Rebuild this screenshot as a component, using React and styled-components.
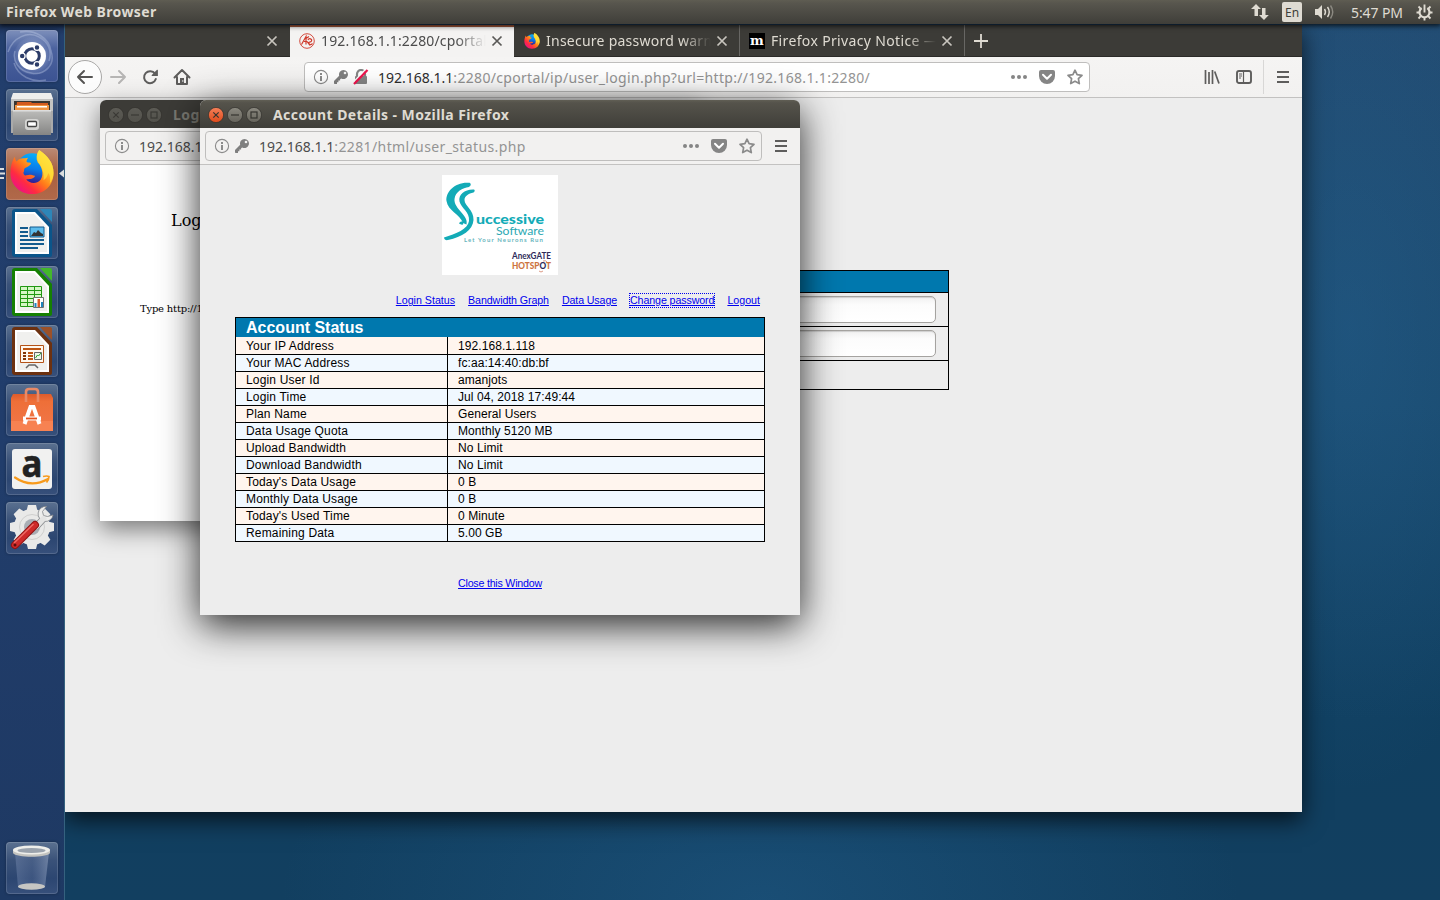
import React from "react";
import styled, { createGlobalStyle, css } from "styled-components";

const GlobalStyle = createGlobalStyle`
  * { box-sizing: border-box; }
  html, body, #root { margin: 0; padding: 0; width: 100%; height: 100%; overflow: hidden; }
  body { font-family: "Noto Sans", sans-serif; font-size: 14px; color: #4c4c4c; }
  svg { display: block; flex: none; }
`;

const Desktop = styled.div`
  position: relative;
  width: 1440px;
  height: 900px;
  overflow: hidden;
  display: flex;
  flex-direction: column;
  background:
    radial-gradient(ellipse 480px 260px at 760px 900px, rgba(36, 98, 146, 0.42), rgba(36, 98, 146, 0)),
    radial-gradient(ellipse 200px 460px at 1350px 330px, rgba(36, 98, 146, 0.4), rgba(36, 98, 146, 0)),
    linear-gradient(180deg, #234b71 0%, #1a4a6e 45%, #103f60 80%, #123f60 100%);
`;

const TopPanel = styled.header`
  position: relative;
  z-index: 10;
  flex: none;
  height: 24px;
  display: flex;
  align-items: center;
  padding: 0 7px 0 6px;
  background: linear-gradient(#5f5d52 0, #58564e 3px, #3f3e39 100%);
  box-shadow: 0 1px 5px 1px rgba(0, 0, 0, 0.75);
  color: #dfdbd2;
`;
const PanelTitle = styled.div`
  flex: 1;
  font-weight: 700;
  font-size: 14px;
  line-height: 24px;
  letter-spacing: 0.38px;
`;
const Indicators = styled.div`
  display: flex;
  align-items: center;
`;
const LangBadge = styled.div`
  width: 20px;
  height: 20px;
  margin: 0 13px 0 13px;
  border-radius: 2px;
  background: #dfdbd2;
  color: #3f3e39;
  font-size: 12px;
  line-height: 21px;
  text-align: center;
`;
const Clock = styled.div`
  margin: 0 12px 0 16px;
  width: 53px;
  white-space: nowrap;
  font-size: 14px;
  letter-spacing: -0.1px;
`;

const Workspace = styled.div`
  flex: 1;
  display: flex;
  min-height: 0;
`;
const Launcher = styled.nav`
  position: relative;
  z-index: 2;
  width: 65px;
  flex: none;
  display: flex;
  flex-direction: column;
  gap: 7px;
  padding: 6px 0 6px 6px;
  border-right: 1px solid #35627f;
  background: linear-gradient(#1c3156 0, #223e6c 12px, #213d6b 50%, #1e3963 100%);
`;
const Tile = styled.div`
  position: relative;
  width: 52px;
  height: 52px;
  flex: none;
  border-radius: 4px;
  background: ${(p) => p.$bg || "linear-gradient(#5b7190 0, #3a5279 35%, #2c4671 70%, #37507b 100%)"};
  box-shadow: inset 0 0 0 1px rgba(255, 255, 255, 0.14), 0 0 3px rgba(0, 0, 0, 0.3);
  margin-top: ${(p) => (p.$last ? "auto" : 0)};
`;
const RunningMarks = styled.svg`
  position: absolute;
  left: 0;
  top: 142px;
`;

const windowBase = css`
  position: absolute;
  display: flex;
  flex-direction: column;
`;
const MainWindow = styled.section`
  ${windowBase}
  left: 65px;
  top: 25px;
  width: 1237px;
  height: 787px;
  background: #ededed;
  box-shadow: 0 8px 22px rgba(0, 0, 0, 0.7);
`;
const Popup = styled.section`
  ${windowBase}
  left: ${(p) => p.$x}px;
  top: 100px;
  width: 600px;
  height: ${(p) => p.$h}px;
  border-radius: 6px 6px 0 0;
  background: ${(p) => p.$bg};
  box-shadow: ${(p) => (p.$active ? "0 10px 38px rgba(0,0,0,0.85)" : "0 8px 24px rgba(0,0,0,0.5)")};
`;

const TabStrip = styled.div`
  display: flex;
  height: 32px;
  flex: none;
  background: #3c3b37;
  border-bottom: 1px solid #2b2a28;
`;
const Tab = styled.div`
  width: ${(p) => p.$w || 225}px;
  height: ${(p) => (p.$active ? 32 : 31)}px;
  display: flex;
  align-items: center;
  padding: 0 ${(p) => (p.$line || p.$active ? 11 : 12)}px 0 ${(p) => p.$pl || 9}px;
  color: ${(p) => (p.$active ? "#4c4c4c" : "#dfdbd2")};
  background: ${(p) => (p.$active ? "#f4f3f2" : "transparent")};
  border-top: ${(p) => (p.$active ? "2px solid #a4583a" : "0")};
  border-right: ${(p) => (p.$line ? "1px solid #686764" : "0")};
`;
const TabLabel = styled.div`
  flex: 1;
  margin: 0 5px 0 6px;
  overflow: hidden;
  white-space: nowrap;
  line-height: 22px;
  letter-spacing: ${(p) => p.$spacing || 0}px;
  mask-image: linear-gradient(to right, #000 82%, transparent 100%);
`;
const TabContent = styled.div`
  flex: 1;
  min-width: 0;
  display: flex;
  align-items: center;
  padding-bottom: ${(p) => (p.$active ? 2 : 0)}px;
`;
const NewTab = styled.div`
  width: 32px;
  display: flex;
  align-items: center;
  justify-content: center;
`;

const NavBar = styled.div`
  height: 41px;
  flex: none;
  display: flex;
  align-items: center;
  padding: 0 3px 0 3px;
  background: linear-gradient(#f5f4f3, #f2f1f0);
  border-bottom: 1px solid #c2c1c0;
`;
const BackButton = styled.div`
  width: 34px;
  height: 34px;
  border-radius: 50%;
  border: 1px solid #a9a8a7;
  background: #fcfcfc;
  display: flex;
  align-items: center;
  justify-content: center;
`;
const NavIcon = styled.div`
  width: 32px;
  display: flex;
  justify-content: center;
  color: ${(p) => (p.$dim ? "#b6b5b4" : "#5e5d5c")};
`;
const AddressBar = styled.div`
  width: ${(p) => p.$w}px;
  height: 30px;
  margin-left: ${(p) => p.$ml}px;
  display: flex;
  align-items: center;
  padding: 0 6px 0 8px;
  background: ${(p) => p.$bg};
  border: 1px solid #bfbebd;
  border-radius: 4px;
  color: #8b8b8b;
`;
const IdentityIcons = styled.div`
  display: flex;
  gap: 4px;
  margin-left: 4px;
`;
const UrlText = styled.div`
  flex: 1;
  margin-left: ${(p) => p.$ml}px;
  padding-top: 2px;
  overflow: hidden;
  white-space: nowrap;
  font-size: 14px;
  line-height: 24px;
  letter-spacing: ${(p) => p.$spacing || 0.32}px;
  color: #949494;
`;
const Host = styled.span`
  color: ${(p) => p.$color || "#2e2e2e"};
  letter-spacing: 0;
`;
const PageActions = styled.div`
  display: flex;
  align-items: center;
  gap: 12px;
`;
const RightTools = styled.div`
  margin-left: auto;
  display: flex;
  align-items: center;
`;
const ToolDivider = styled.div`
  width: 1px;
  height: 34px;
  background: #d8d7d6;
  margin: 0 3px;
`;

const MainPage = styled.main`
  flex: 1;
  display: flex;
  justify-content: center;
  align-items: flex-start;
  padding-top: 172px;
`;
const LoginTable = styled.div`
  width: 531px;
  border: 1px solid #000;
`;
const LoginHead = styled.div`
  height: 22px;
  background: #0078ae;
  border-bottom: 1px solid #000;
`;
const LoginRow = styled.div`
  height: ${(p) => p.$h}px;
  display: flex;
  justify-content: flex-end;
  align-items: center;
  padding-right: 12px;
  border-bottom: ${(p) => (p.$last ? "0" : "1px solid #000")};
`;
const Field = styled.div`
  width: 300px;
  height: 27px;
  border: 1px solid #a5a3a0;
  border-radius: 5px;
  background: linear-gradient(#f0f0f0, #fcfcfc 8px, #fff);
  box-shadow: inset 0 1px 1px rgba(0, 0, 0, 0.14);
`;

const TitleBar = styled.div`
  height: 28px;
  flex: none;
  display: flex;
  align-items: center;
  gap: 3px;
  padding: 1px 0 0 ${(p) => (p.$active ? 7.5 : 7.5)}px;
  border-radius: 6px 6px 0 0;
  background: ${(p) => (p.$active ? "linear-gradient(#605e54 0, #55534b 3px, #3f3e39 100%)" : "#3c3b37")};
`;
const WindowTitle = styled.div`
  margin-left: 8.5px;
  font-weight: 700;
  font-size: 14px;
  white-space: nowrap;
  letter-spacing: 0.42px;
  color: ${(p) => (p.$active ? "#dfdbd2" : "#7a7972")};
`;
const PopupBar = styled.div`
  height: 37px;
  flex: none;
  display: flex;
  align-items: center;
  padding: 0 11px 0 5px;
  background: #f2f1f0;
  border-bottom: 1px solid #c3c2c1;
  justify-content: space-between;
`;

const LogoutPage = styled.main`
  font-family: "DejaVu Serif", serif;
  color: #000;
  padding: 46px 0 0 40px;
`;
const LogoutHeading = styled.div`
  font-size: 16px;
  line-height: 20px;
  padding-left: 31px;
`;
const LogoutHint = styled.div`
  margin-top: 71px;
  font-size: 10px;
  line-height: 14px;
  letter-spacing: -0.2px;
  white-space: nowrap;
`;

const StatusPage = styled.main`
  flex: 1;
  display: flex;
  flex-direction: column;
  padding: 10px 35px 0;
  font-family: "Liberation Sans", Arial, sans-serif;
  color: #000;
`;
const LogoBox = styled.div`
  align-self: center;
  width: 116px;
  height: 100px;
  background: #fff;
`;
const LinkRow = styled.div`
  display: flex;
  justify-content: flex-end;
  gap: 13px;
  padding-right: 5px;
  margin-top: 19px;
  height: 13px;
`;
const PageLink = styled.a`
  font-size: 10.6667px;
  line-height: 13px;
  letter-spacing: ${(p) => p.$spacing || 0}px;
  color: #0000ee;
  text-decoration: underline;
  white-space: nowrap;
  ${(p) => p.$focused && css`outline: 1px dotted #0000ee;`}
`;
const StatusTable = styled.table`
  margin-top: 10px;
  width: 530px;
  border: 1px solid #000;
  border-spacing: 0;
  font-size: 12px;
  table-layout: fixed;
`;
const HeadCell = styled.th`
  height: 19px;
  padding: 0 0 0 10px;
  background: #0078ae;
  color: #fff;
  font-size: 16px;
  line-height: 19px;
  text-align: left;
`;
const Cell = styled.td`
  height: ${(p) => (p.$first ? 18 : p.$last ? 16 : 17)}px;
  padding: ${(p) => (p.$first ? 1 : 0)}px 0 0 10px;
  line-height: 16px;
  letter-spacing: ${(p) => (p.$label ? 0.17 : 0.08)}px;
  background: ${(p) => (p.$even ? "#f0f8ff" : "#fff5ee")};
  border-bottom: ${(p) => (p.$last ? "0" : "1px solid #000")};
  border-right: ${(p) => (p.$label ? "1px solid #000" : "0")};
`;
const CloseRow = styled.div`
  margin-top: 35px;
  text-align: center;
  line-height: 13px;
  font-size: 10.6667px;
`;

const Cross = ({ color }) => (
  <svg width="12" height="12" viewBox="0 0 12 12"><path d="M1.500 1.500l9 9M10.500 1.500l-9 9" stroke={color} strokeWidth="1.700" /></svg>
);
const Info = () => (
  <svg width="16" height="16" viewBox="0 0 16 16" fill="none" stroke="#8b8b8b">
    <circle cx="8" cy="8" r="6.600" strokeWidth="1.100" />
    <path d="M8 7v5" strokeWidth="2" /><path d="M8 4v2" strokeWidth="2" />
  </svg>
);
const KeyIcon = () => (
  <svg width="16" height="16" viewBox="0 0 16 16">
    <path d="M10.500 1a4.500 4.500 0 0 0-4.300 5.800L1 12v2.300c0 .4.300.7.700.7H4v-1.800h1.400v-1.600h1.700v-1.400l1.100-.8A4.500 4.500 0 1 0 10.500 1z" fill="#7f7f7f" />
    <circle cx="12" cy="4" r="1.300" fill="#f4f4f4" />
  </svg>
);
const LockOff = () => (
  <svg width="16" height="16" viewBox="0 0 16 16">
    <path d="M4 8V5a4 4 0 0 1 8 0v3" fill="none" stroke="#858585" strokeWidth="2.200" />
    <rect x="2" y="7" width="12" height="8" rx="1" fill="#858585" />
    <path d="M0 13.500L12.500 .5" stroke="#fff" strokeWidth="1.500" />
    <path d="M1 15L14.500 1" stroke="#f0134d" strokeWidth="2.200" />
  </svg>
);
const Dots = () => (
  <svg width="16" height="16" viewBox="0 0 16 16" fill="#858585"><circle cx="2" cy="8" r="2" /><circle cx="8" cy="8" r="2" /><circle cx="14" cy="8" r="2" /></svg>
);
const Pocket = () => (
  <svg width="16" height="16" viewBox="0 0 16 16">
    <path d="M2 1h12a2 2 0 0 1 2 2v4a8 8 0 0 1-16 0V3a2 2 0 0 1 2-2z" fill="#858585" />
    <path d="M4 5.800l4 3.900 4-3.900" fill="none" stroke="#fff" strokeWidth="2" strokeLinecap="round" strokeLinejoin="round" />
  </svg>
);
const Star = () => (
  <svg width="16" height="16" viewBox="0 0 16 16"><path d="M8 1.200l2.100 4.500 4.900.6-3.600 3.400.9 4.900L8 12.200l-4.300 2.400.9-4.900L1 6.300l4.900-.6z" fill="none" stroke="#8b8b8b" strokeWidth="1.700" strokeLinejoin="round" /></svg>
);
const Menu = () => (
  <svg width="16" height="16" viewBox="0 0 16 16"><path d="M2 3h12M2 8h12M2 13h12" stroke="#5e5d5c" strokeWidth="1.900" /></svg>
);
const ArrowIcon = ({ flip }) => (
  <svg width="18" height="16" viewBox="0 0 18 16" fill="none" stroke={flip ? "currentColor" : "#555453"} strokeWidth="2" strokeLinecap="round" strokeLinejoin="round">
    <path d={flip ? "M2 8h14M10 2l6 6-6 6" : "M16 8H2M8 2L2 8l6 6"} />
  </svg>
);
const Reload = () => (
  <svg width="16" height="16" viewBox="0 0 16 16">
    <path d="M13 4.700A6 6 0 1 0 13.800 10" fill="none" stroke="currentColor" strokeWidth="2" strokeLinecap="round" />
    <path d="M15 .8a.6.6 0 0 1 .9.500V7H10.300a.6.6 0 0 1-.5-1z" fill="currentColor" />
  </svg>
);
const Home = () => (
  <svg width="18" height="18" viewBox="0 0 18 18">
    <path d="M1.500 9.500L9 2l7.500 7.500M4 9v7h10V9" fill="none" stroke="currentColor" strokeWidth="2" strokeLinecap="round" strokeLinejoin="round" />
    <path d="M7 16v-6h4v6z" fill="currentColor" /><circle cx="9.800" cy="13" r=".7" fill="#fff" />
  </svg>
);
const Library = () => (
  <svg width="16" height="16" viewBox="0 0 16 16" stroke="#5e5d5c" strokeWidth="1.700"><path d="M1.500 1v14M5 3v12M8.500 1v14" /><path d="M10.700 2.500l4.300 12" /></svg>
);
const Sidebar = () => (
  <svg width="16" height="16" viewBox="0 0 16 16" fill="none" stroke="#5e5d5c">
    <rect x="1" y="2" width="14" height="12" rx="2" strokeWidth="1.900" /><path d="M7.500 2v12" strokeWidth="1.200" /><path d="M3 5h3M3 7h3M3 9h2" strokeWidth="1" />
  </svg>
);

const FirefoxLogo = ({ size, id }) => (
  <svg width={size} height={size} viewBox="0 0 46 47">
    <defs>
      <linearGradient id={`${id}o`} x1=".9" y1=".05" x2=".15" y2=".9">
        <stop offset="0" stopColor="#fff44f" /><stop offset=".3" stopColor="#ffc128" /><stop offset=".55" stopColor="#ff7a1a" /><stop offset=".78" stopColor="#ff2c40" /><stop offset="1" stopColor="#ee1183" />
      </linearGradient>
      <linearGradient id={`${id}b`} x1=".6" y1="0" x2=".4" y2="1">
        <stop offset="0" stopColor="#08b0fb" /><stop offset=".5" stopColor="#087bea" /><stop offset="1" stopColor="#3a0f86" />
      </linearGradient>
    </defs>
    <circle cx="23" cy="19.500" r="16" fill={`url(#${id}b)`} />
    <path d="M30.500 0C39 6 45.500 13 45.500 24 45.500 37 36 46 23 46S.5 36 .5 24C.5 17 2 12 5 7c.3 2 1 4 2 5 2-3 5-3.500 9-3.500L19 8c-1.500 2-2 3.500-1.500 4.500 1.500 1 4 0 4.500 1.500-1 3-6 4-7 5.500-.5 1.500 0 3-1 4 0 1.500 1 3.500 3 3 3-1 5-1 9 .5 0 2-3 4-9 3.500 2 3.500 10 6.500 15 .5 4-6 1-14-3-18-2-4-1.500-9 1.500-13z" fill={`url(#${id}o)`} />
    <path d="M30.500 0C39 6 45.500 13 45.500 24c0 4-1.500 8-4 11 1-5 .5-9-1.500-11-1 4-2.500 6-5 7.500 1-6-1-13-5-18.500-2-4-2.500-9 .5-13z" fill="#ffe23b" opacity=".75" />
  </svg>
);

const UbuntuIcon = () => (
  <svg width="52" height="52" viewBox="0 0 52 52">
    <defs><radialGradient id="ub"><stop offset=".3" stopColor="#c9d3ea" stopOpacity=".65" /><stop offset="1" stopColor="#8ea0cf" stopOpacity=".12" /></radialGradient></defs>
    <circle cx="27" cy="26" r="19" fill="url(#ub)" />
    <path d="M2 22C7 7 22 1 33 7c10 5 13 15 10 24M45 21c5 14-7 25-20 22C13 41 6 31 9 21M14 2c15-3 29 6 31 19M40 50c-14 3-28-4-32-17" fill="none" stroke="#c9d4ee" strokeOpacity=".35" strokeWidth="1.500" />
    <circle cx="26" cy="26" r="14" fill="#fff" />
    <circle cx="26" cy="26" r="7.300" fill="none" stroke="#2c3c68" strokeWidth="3" />
    <g stroke="#fff" strokeWidth="1.300" fill="#2c3c68"><circle cx="16.200" cy="26" r="2.900" /><circle cx="31" cy="17.500" r="2.900" /><circle cx="31" cy="34.500" r="2.900" /></g>
  </svg>
);
const FilesIcon = () => (
  <svg width="52" height="52" viewBox="0 0 52 52">
    <defs><linearGradient id="fg" x2="0" y2="1"><stop offset="0" stopColor="#bdbdbb" /><stop offset="1" stopColor="#858584" /></linearGradient></defs>
    <path d="M7 5h38l2 5v34H5V10z" fill="#aaa" /><path d="M7 4h38l2 6H5z" fill="#eeeeec" /><path d="M5 10h42v12H5z" fill="#c4c4c2" />
    <path d="M8 12h36v10H8z" fill="#393531" /><path d="M11 13h14l1 1h16v8H10z" fill="#d35a1e" /><path d="M9 16h34v6H9z" fill="#ef9341" /><path d="M11 17h30v1.500H11z" fill="#fff" />
    <path d="M7 21h38v25H7z" fill="url(#fg)" /><path d="M7 21h38v1.500H7z" fill="#ddd" />
    <rect x="19" y="30" width="14" height="11" rx="3" fill="#d4d4d2" /><rect x="21.500" y="32.500" width="9" height="5" rx="1" fill="#fff" stroke="#444" strokeWidth="1.300" />
  </svg>
);
const OfficeDoc = ({ dark, light, children }) => (
  <svg width="52" height="52" viewBox="0 0 52 52">
    <path d="M9 2h22l15 16v30a2 2 0 0 1-2 2H9a3 3 0 0 1-3-3V5a3 3 0 0 1 3-3z" fill={dark} />
    <path d="M9 5h20l14 15v27H9z" fill="#fff" />
    <path d="M11 7h17l13 14v24H11z" fill="#f0f0ee" />
    <path d="M34 2h10a2 2 0 0 1 2 2v11z" fill={light} />
    {children}
  </svg>
);
const StoreIcon = () => (
  <svg width="52" height="52" viewBox="0 0 52 52">
    <defs><linearGradient id="sg" x2="0" y2="1"><stop offset="0" stopColor="#dd5b2b" /><stop offset=".2" stopColor="#ee6f38" /><stop offset="1" stopColor="#f1774a" /></linearGradient></defs>
    <path d="M5 14l2-4h38l2 4v33H5z" fill="url(#sg)" />
    <path d="M20 18V8q0-3 3-3h6q3 0 3 3v10" fill="none" stroke="#e98a66" strokeWidth="2.600" />
    <path d="M5 37h42v10H5z" fill="#fa8757" opacity=".7" />
    <path d="M18.500 40l6-17h3l6 17M17 34.500h18" stroke="#fff" strokeWidth="4" fill="none" /><path d="M20 34.500h11" stroke="#e95420" strokeWidth="1.800" />
  </svg>
);
const Letter = styled.text`
  font-family: "Open Sans", sans-serif;
  font-weight: 700;
`;
const AmazonIcon = () => (
  <svg width="52" height="52" viewBox="0 0 52 52">
    <rect x="6" y="6" width="40" height="40" rx="3" fill="#f1f1f0" />
    <Letter x="15.500" y="34" fontSize="38" fill="#222" stroke="#222" strokeWidth=".6" textLength="21" lengthAdjust="spacingAndGlyphs">a</Letter>
    <path d="M9 34.500q16 11 33 1.500" fill="none" stroke="#f79a1c" strokeWidth="2.200" strokeLinecap="round" /><path d="M37 33.500q4-1 6 0 0 3-2.500 6" fill="none" stroke="#f79a1c" strokeWidth="1.700" />
  </svg>
);
const SettingsIcon = () => (
  <svg width="52" height="52" viewBox="0 0 52 52">
    <g fill="#e9e9e8"><circle cx="26" cy="25" r="18" />
      {[0, 45, 90, 135, 180, 225, 270, 315].map((a) => <path key={a} d="M20.500 9l1.500-6h8l1.500 6z" transform={`rotate(${a} 26 25)`} />)}
    </g>
    <circle cx="26" cy="25" r="12.500" fill="none" stroke="#cfcfce" /><circle cx="26" cy="25" r="8" fill="#a9aeb5" />
    <path d="M29 26l10-11" stroke="#83868a" strokeWidth="7" /><path d="M47 13a7.500 7.500 0 1 1-6.500-8.500l-4 5 1 4 4 1z" fill="#ededec" stroke="#83868a" strokeWidth=".8" />
    <path d="M29 26l10-11" stroke="#e4e4e3" strokeWidth="5.500" />
    <path d="M29 23L9 43" stroke="#8f1414" strokeWidth="8" strokeLinecap="round" /><path d="M29 23L9 43" stroke="#ce2a2a" strokeWidth="6" strokeLinecap="round" /><path d="M27.500 22L8 41" stroke="#ee6a65" strokeWidth="1.500" />
    <circle cx="9" cy="43" r="1.500" fill="#5d0d0d" />
  </svg>
);
const TrashIcon = () => (
  <svg width="52" height="52" viewBox="0 0 52 52">
    <defs><linearGradient id="tg"><stop offset="0" stopColor="#8194b8" stopOpacity=".4" /><stop offset=".5" stopColor="#6c80aa" stopOpacity=".25" /><stop offset="1" stopColor="#a1b0cb" stopOpacity=".5" /></linearGradient></defs>
    <path d="M9 10l3 35q14 5 27 0l4-35z" fill="url(#tg)" />
    <ellipse cx="25.500" cy="44.500" rx="13.500" ry="3.300" fill="#c6c6c3" />
    <path d="M7 8v3c3 5 34 5 37 0V8z" fill="#c3c3bf" /><ellipse cx="25.500" cy="8" rx="18.500" ry="4.500" fill="#eeeeea" /><ellipse cx="25.500" cy="8.500" rx="14" ry="2.500" fill="#9aa2ac" />
  </svg>
);

const CompanyLogo = () => (
  <svg width="116" height="100" viewBox="0 0 116 100">
    <g fill="#13abb7">
      <path d="M27.500 7.800C13 6.500 3.500 17 4.500 26c1.500 10 13.500 13 16.500 22l3.500 1.500C27 40 11.500 34 12.500 24c1-7.500 8-11 14.500-12 2.500-1.500 2-3.500.5-4.200z" />
      <path d="M32 14.500c-9-.5-16 5-14.500 12C19 33 28 37 27 46c-1 8-13 13-25 16.500 0 2 2 3 4 2.500C20 62 31 55 31.500 45 32 35 22.500 31 22.500 25c0-4 4-6.500 9-7.500 1.500-1 1.500-2.500.5-3z" />
      <path d="M17 48.500c1-2 3-2.500 4.500-1.500l-.5 2.500q-2 .5-4-1z" />
    </g>
    <text x="34" y="49" fontFamily="Lato, sans-serif" fontWeight="900" fontSize="14" fill="#13abb7" textLength="68" lengthAdjust="spacingAndGlyphs">uccessive</text>
    <text x="54" y="59.500" fontFamily="Lato, sans-serif" fontSize="11.500" fill="#2ba8b3" textLength="48" lengthAdjust="spacingAndGlyphs">Software</text>
    <text x="22" y="67" fontFamily="Lato, sans-serif" fontWeight="700" fontSize="6" fill="#67b5bd" textLength="79">Let Your Neurons Run</text>
    <text x="70" y="84" fontFamily="Lato, sans-serif" fontWeight="700" fontSize="9.500" fill="#2e2c5a" textLength="39" lengthAdjust="spacingAndGlyphs">AnexGATE</text>
    <text x="70" y="94" fontFamily="Lato, sans-serif" fontWeight="900" fontSize="8.500" fill="#cd7440" textLength="39" lengthAdjust="spacingAndGlyphs">HOTSP<tspan fill="#2e2c5a">O</tspan>T</text>
    <path d="M101 86q3-1 4 1M97 96q2 2 4 0" fill="none" stroke="#dc9a85" />
  </svg>
);

const WindowButton = ({ fill, glyph, children }) => (
  <svg width="16" height="16" viewBox="0 0 16 16" fill="none" stroke={glyph} strokeWidth="1.200">
    <circle cx="8" cy="8" r="7.600" fill={fill} stroke="#32312d" strokeWidth=".7" />
    {children}
  </svg>
);
const WindowButtons = ({ active }) => {
  const glyph = active ? "#35342f" : "#3a3935";
  const id = active ? "wa" : "wi";
  return (
    <>
      <svg width="0" height="0" style={undefined}>
        <defs>
          <linearGradient id={`${id}g`} x2="0" y2="1"><stop offset="0" stopColor={active ? "#8b8980" : "#5c5b55"} /><stop offset="1" stopColor={active ? "#65635b" : "#52514b"} /></linearGradient>
          <linearGradient id={`${id}r`} x2="0" y2="1"><stop offset="0" stopColor="#f58059" /><stop offset="1" stopColor="#df4a1a" /></linearGradient>
        </defs>
      </svg>
      <ButtonGroup>
        <WindowButton fill={`url(#${id}${active ? "r" : "g"})`} glyph={glyph}><path d="M5.300 5.300l5.400 5.400M10.700 5.300l-5.400 5.400" /></WindowButton>
        <WindowButton fill={`url(#${id}g)`} glyph={glyph}><path d="M4 8h8" /></WindowButton>
        <WindowButton fill={`url(#${id}g)`} glyph={glyph}><rect x="5" y="5" width="6" height="6" /></WindowButton>
      </ButtonGroup>
    </>
  );
};
const ButtonGroup = styled.div`
  display: flex;
  gap: 3px;
  margin-left: -3px;
`;

const rows = [
  ["Your IP Address", "192.168.1.118"],
  ["Your MAC Address", "fc:aa:14:40:db:bf"],
  ["Login User Id", "amanjots"],
  ["Login Time", "Jul 04, 2018 17:49:44"],
  ["Plan Name", "General Users"],
  ["Data Usage Quota", "Monthly 5120 MB"],
  ["Upload Bandwidth", "No Limit"],
  ["Download Bandwidth", "No Limit"],
  ["Today's Data Usage", "0 B"],
  ["Monthly Data Usage", "0 B"],
  ["Today's Used Time", "0 Minute"],
  ["Remaining Data", "5.00 GB"],
];

export default function App() {
  return (
    <Desktop>
      <GlobalStyle />
      <TopPanel>
        <PanelTitle>Firefox Web Browser</PanelTitle>
        <Indicators>
          <svg width="18" height="18" viewBox="0 0 18 18" fill="#dfdbd2"><path d="M5 1l5 5H7v7H3.500V6H0zM13 17l-5-5h3V5h3.500v7h3.300z" /></svg>
          <LangBadge>En</LangBadge>
          <svg width="20" height="16" viewBox="0 0 20 16" fill="none" stroke="#dfdbd2" strokeWidth="1.400"><path d="M0 5h3l4-4v14l-4-4H0z" fill="#dfdbd2" stroke="none" /><path d="M9.500 5q2 3 0 6M12.500 3q3.500 5 0 10" /><path d="M15.500 1.500q4.500 6.500 0 13" stroke="#8c8a82" /></svg>
          <Clock>5:47 PM</Clock>
          <svg width="17" height="17" viewBox="0 0 17 17" fill="none" stroke="#dfdbd2"><path d="M5.700 4.200a5 5 0 1 0 5.600 0" strokeWidth="2.200" /><path d="M8.500.5v8M8.500 13.500v3M.5 8.500h3M13.500 8.500h3M2.500 2.500l2.300 2.300M14.500 2.500l-2.300 2.300M2.500 14.500l2.300-2.300M14.500 14.500l-2.300-2.300" strokeWidth="1.900" /></svg>
        </Indicators>
      </TopPanel>

      <Workspace>
        <Launcher>
          <Tile $bg="linear-gradient(#7f91bc, #4c639f 35%, #3c5392)"><UbuntuIcon /></Tile>
          <Tile><FilesIcon /></Tile>
          <Tile $bg="linear-gradient(#bb8a75, #a8603f 45%, #b1694a)">
            <svg width="52" height="52" viewBox="-3.500 -2 52 52"><FirefoxLogo size={45} id="launcher" /></svg>
          </Tile>
          <Tile>
            <OfficeDoc dark="#0b558a" light="#2d86b8">
              <path d="M14 21h8M14 25h8M14 29h8M14 33h24M14 37h24M14 41h18" stroke="#135b8e" strokeWidth="2" />
              <path d="M24 20h14v10H24z" fill="#5dbcec" stroke="#135b8e" /><path d="M25 29l3-4 2 1 2-3 3 3 2 1v2z" fill="#333" />
            </OfficeDoc>
          </Tile>
          <Tile>
            <OfficeDoc dark="#158002" light="#43b72b">
              <path d="M14.500 20.500h21v20h-21zM14.500 24.500h21M14.500 28.500h21M14.500 32.500h21M14.500 36.500h21M21.500 20.500v20M28.500 20.500v20" fill="#d5f6c5" stroke="#219812" />
              <path d="M27.500 31.500h10v10h-10z" fill="#fff" stroke="#6f6f6f" /><path d="M28.500 37h2v4h-2z" fill="#1e85bd" /><path d="M31.500 33h2.500v8h-2.500z" fill="#dc5a26" /><path d="M35 36h2v5h-2z" fill="#1e85bd" />
            </OfficeDoc>
          </Tile>
          <Tile>
            <OfficeDoc dark="#6c3110" light="#9c5128">
              <path d="M14.500 20.500h23v17h-23z" fill="#fff8ef" stroke="#b45318" /><path d="M17 24h18M22 28h5M22 31h5M22 34h5" stroke="#bd5512" strokeWidth="2" /><path d="M17 28h3M17 31h3M17 34h3" stroke="#823507" strokeWidth="2" />
              <path d="M28.500 27.500h7v7h-7z" fill="#ecf6e9" stroke="#666" /><path d="M29.500 33l2-3 1 1 2.500-3" stroke="#28a328" fill="none" /><path d="M20 43l3-3h6l3 3" stroke="#666" strokeWidth="1.500" fill="none" />
            </OfficeDoc>
          </Tile>
          <Tile><StoreIcon /></Tile>
          <Tile><AmazonIcon /></Tile>
          <Tile><SettingsIcon /></Tile>
          <Tile $last><TrashIcon /></Tile>
          <RunningMarks width="65" height="16" viewBox="0 0 65 16" fill="#dbdedf"><path d="M0 2h4v2H0zM0 6.500h5v2H0zM0 11h4v2H0zM59 7.500l5-4v8z" /></RunningMarks>
        </Launcher>
      </Workspace>

      <MainWindow>
        <TabStrip>
          <Tab><TabLabel /><Cross color="#c8c5be" /></Tab>
          <Tab $active $w={224}>
            <TabContent $active>
              <svg width="16" height="16" viewBox="0 0 16 16" fill="none" stroke="#cf3a2c"><circle cx="8" cy="8" r="7.300" strokeWidth=".9" /><path d="M2.500 11.500L7 3.500v8M7 5.500l3-2M5 8.500h3l3 4M9 7c1-2.500 4.500-1 3.500 1s-3.500 0-2.500 2.500 3 .5 3.500 0" strokeWidth="1.200" /></svg>
              <TabLabel $spacing={0.15}>192.168.1.1:2280/cportal</TabLabel><Cross color="#5a5957" />
            </TabContent>
          </Tab>
          <Tab $line $w={226} $pl={10}><FirefoxLogo size={16} id="tab" /><TabLabel $spacing={0.25}>Insecure password warning</TabLabel><Cross color="#c8c5be" /></Tab>
          <Tab $line>
            <svg width="16" height="16" viewBox="0 0 16 16"><rect width="16" height="16" /><text x="8" y="12" textAnchor="middle" fontFamily="DejaVu Serif, serif" fontWeight="700" fontSize="13" fill="#fff">m</text></svg>
            <TabLabel $spacing={0.35}>Firefox Privacy Notice — Mozilla</TabLabel><Cross color="#c8c5be" />
          </Tab>
          <NewTab><svg width="14" height="14" viewBox="0 0 14 14"><path d="M7 0v14M0 7h14" stroke="#dfdbd2" strokeWidth="1.800" /></svg></NewTab>
        </TabStrip>
        <NavBar>
          <BackButton><ArrowIcon /></BackButton>
          <NavIcon $dim><ArrowIcon flip /></NavIcon>
          <NavIcon><Reload /></NavIcon>
          <NavIcon><Home /></NavIcon>
          <AddressBar $w={786} $ml={106} $bg="#fff">
            <Info />
            <IdentityIcons><KeyIcon /><LockOff /></IdentityIcons>
            <UrlText $ml={9}><Host>192.168.1.1</Host>:2280/cportal/ip/user_login.php?url=http://192.168.1.1:2280/</UrlText>
            <PageActions><Dots /><Pocket /><Star /></PageActions>
          </AddressBar>
          <RightTools>
            <NavIcon><Library /></NavIcon><NavIcon><Sidebar /></NavIcon><ToolDivider /><NavIcon><Menu /></NavIcon>
          </RightTools>
        </NavBar>
        <MainPage>
          <LoginTable>
            <LoginHead />
            <LoginRow $h={34}><Field /></LoginRow>
            <LoginRow $h={34}><Field /></LoginRow>
            <LoginRow $h={28} $last />
          </LoginTable>
        </MainPage>
      </MainWindow>

      <Popup $x={100} $h={421} $bg="#fff">
        <TitleBar><WindowButtons /><WindowTitle>Log</WindowTitle></TitleBar>
        <PopupBar>
          <AddressBar $w={557} $ml={0} $bg="#f2f1f0"><Info /><UrlText $ml={9}><Host $color="#4c4c4c">192.168.1.1</Host></UrlText></AddressBar>
        </PopupBar>
        <LogoutPage>
          <LogoutHeading>Log</LogoutHeading>
          <LogoutHint>Type http://1</LogoutHint>
        </LogoutPage>
      </Popup>

      <Popup $x={200} $h={515} $bg="#ededed" $active>
        <TitleBar $active><WindowButtons active /><WindowTitle $active>Account Details - Mozilla Firefox</WindowTitle></TitleBar>
        <PopupBar>
          <AddressBar $w={557} $ml={0} $bg="#f2f1f0">
            <Info /><IdentityIcons><KeyIcon /></IdentityIcons>
            <UrlText $ml={9} $spacing={0.38}><Host $color="#4c4c4c">192.168.1.1</Host>:2281/html/user_status.php</UrlText>
            <PageActions><Dots /><Pocket /><Star /></PageActions>
          </AddressBar>
          <Menu />
        </PopupBar>
        <StatusPage>
          <LogoBox><CompanyLogo /></LogoBox>
          <LinkRow>
            <PageLink>Login Status</PageLink>
            <PageLink $spacing={-0.1}>Bandwidth Graph</PageLink>
            <PageLink $spacing={-0.12}>Data Usage</PageLink>
            <PageLink $spacing={-0.1} $focused>Change password</PageLink>
            <PageLink>Logout</PageLink>
          </LinkRow>
          <StatusTable>
            <colgroup><col width="212" /><col /></colgroup>
            <tbody>
              <tr><HeadCell colSpan={2}>Account Status</HeadCell></tr>
              {rows.map(([label, value], i) => {
                const look = { $even: i % 2 === 1, $first: i === 0, $last: i === rows.length - 1 };
                return (
                  <tr key={label}>
                    <Cell $label {...look}>{label}</Cell>
                    <Cell {...look}>{value}</Cell>
                  </tr>
                );
              })}
            </tbody>
          </StatusTable>
          <CloseRow><PageLink $spacing={-0.22}>Close this Window</PageLink></CloseRow>
        </StatusPage>
      </Popup>
    </Desktop>
  );
}
